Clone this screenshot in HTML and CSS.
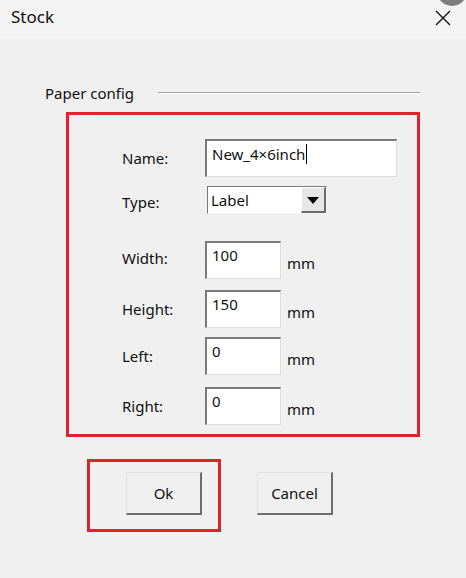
FILE: index.html
```html
<!DOCTYPE html>
<html>
<head>
<meta charset="utf-8">
<link rel="stylesheet" href="styles.css">
</head>
<body>
<div class="window">
  <div class="titlebar">
    <span class="title">Stock</span>
    <svg class="close" width="16" height="16" viewBox="0 0 16 16"><path d="M1 1 L15 15 M15 1 L1 15" stroke="#111" stroke-width="1.4" fill="none"/></svg>
  </div>
  <div class="badge"></div>
  <div class="group-head">
    <span class="group-label">Paper config</span>
    <span class="rule"></span>
  </div>
  <div class="highlight form">
    <div class="row row-name">
      <span class="label">Name:</span>
      <div class="field field-wide">New_4×6inch<span class="caret"></span></div>
    </div>
    <div class="row row-type">
      <span class="label">Type:</span>
      <div class="select">
        <span class="select-text">Label</span>
        <span class="select-btn"><span class="tri"></span></span>
      </div>
    </div>
    <div class="row row-width">
      <span class="label">Width:</span>
      <div class="field">100</div>
      <span class="unit">mm</span>
    </div>
    <div class="row row-height">
      <span class="label">Height:</span>
      <div class="field">150</div>
      <span class="unit">mm</span>
    </div>
    <div class="row row-left">
      <span class="label">Left:</span>
      <div class="field">0</div>
      <span class="unit">mm</span>
    </div>
    <div class="row row-right">
      <span class="label">Right:</span>
      <div class="field">0</div>
      <span class="unit">mm</span>
    </div>
  </div>
  <div class="actions">
    <div class="highlight ok-wrap"><button class="btn">Ok</button></div>
    <button class="btn btn-cancel">Cancel</button>
  </div>
</div>
</body>
</html>
```
FILE: styles.css
```css
html, body {
  margin: 0;
  padding: 0;
  background: #f0f0f0;
}
body {
  font-family: "Noto Sans", "Open Sans", sans-serif;
  color: #111;
  width: 466px;
  height: 578px;
  overflow: hidden;
}
.window {
  position: relative;
  width: 466px;
  height: 578px;
}
.titlebar {
  height: 39px;
  background: #f3f3f3;
  display: flex;
  justify-content: space-between;
  align-items: flex-start;
  padding: 0 15px 0 11px;
  box-sizing: border-box;
}
.title {
  font-size: 17px;
  line-height: 20px;
  margin-top: 7px;
}
.close {
  margin-top: 10px;
  width: 16px;
  height: 16px;
}
.badge {
  position: absolute;
  left: 437px;
  top: -24px;
  width: 30px;
  height: 30px;
  border-radius: 50%;
  background: #7c7c7c;
}
.group-head {
  display: flex;
  align-items: center;
  margin-top: 44px;
  height: 20px;
  padding-right: 46px;
  padding-left: 45px;
}
.group-label {
  width: 113px;
  flex: none;
  font-size: 15px;
  line-height: 20px;
}
.rule {
  flex: 1;
  height: 1px;
  background: #a0a0a0;
  border-bottom: 1px solid #fff;
}
.highlight {
  border: 3px solid #e0222c;
  box-sizing: border-box;
}
.form {
  margin: 9px 0 0 66px;
  width: 354px;
  height: 325px;
  padding: 24px 0 0 53px;
}
.row {
  display: flex;
  align-items: center;
  height: 38px;
}
.label {
  width: 83px;
  flex: none;
  font-size: 15px;
  line-height: 18px;
}
.row-type { height: 28px; margin-top: 9px; }
.row-type .label { margin-top: 3px; }
.row-width { margin-top: 27px; }
.row-width .label { margin-top: -4px; }
.row-height { margin-top: 11px; }
.row-left { margin-top: 9px; }
.row-right { margin-top: 12px; }
.field {
  box-sizing: border-box;
  width: 76px;
  height: 38px;
  background: #fff;
  border-top: 2px solid #7a7a7a;
  border-left: 2px solid #7a7a7a;
  border-right: 1px solid #dedede;
  border-bottom: 1px solid #dedede;
  padding: 3px 0 0 5px;
  font-size: 15px;
  line-height: 18px;
  white-space: nowrap;
}
.field-wide {
  width: 192px;
}
.caret {
  display: inline-block;
  width: 1px;
  height: 20px;
  background: #000;
  vertical-align: -4px;
  margin-left: 1px;
}
.unit {
  font-size: 15px;
  line-height: 18px;
  margin: 5px 0 0 6px;
}
.select {
  box-sizing: border-box;
  width: 120px;
  height: 28px;
  margin-left: 2px;
  display: flex;
  background: #fff;
  border-top: 1px solid #7a7a7a;
  border-left: 1px solid #7a7a7a;
  border-right: 1px solid #f4f4f4;
  border-bottom: 1px solid #f4f4f4;
}
.select-text {
  flex: 1;
  font-size: 15px;
  line-height: 26px;
  padding-left: 3px;
}
.select-btn {
  width: 25px;
  box-sizing: border-box;
  background: #e6e6e6;
  border-top: 1px solid #fff;
  border-left: 1px solid #fff;
  border-right: 2px solid #6a6a6a;
  border-bottom: 2px solid #6a6a6a;
  display: flex;
  align-items: center;
  justify-content: center;
}
.tri {
  width: 0;
  height: 0;
  border-left: 6px solid transparent;
  border-right: 6px solid transparent;
  border-top: 7px solid #000;
  margin-top: 1px;
}
.actions {
  display: flex;
  align-items: flex-start;
  margin: 22px 0 0 87px;
}
.ok-wrap {
  width: 134px;
  height: 73px;
  padding: 10px 0 0 36px;
}
.btn {
  box-sizing: border-box;
  width: 76px;
  height: 43px;
  margin: 0;
  padding: 0;
  background: #f0f0f0;
  border-top: 1px solid #e2e2e2;
  border-left: 1px solid #e2e2e2;
  border-right: 2px solid #6e6e6e;
  border-bottom: 2px solid #6e6e6e;
  border-radius: 0;
  font-family: "Noto Sans", "Open Sans", sans-serif;
  font-size: 15px;
  color: #111;
}
.btn-cancel {
  margin: 13px 0 0 36px;
}
```
